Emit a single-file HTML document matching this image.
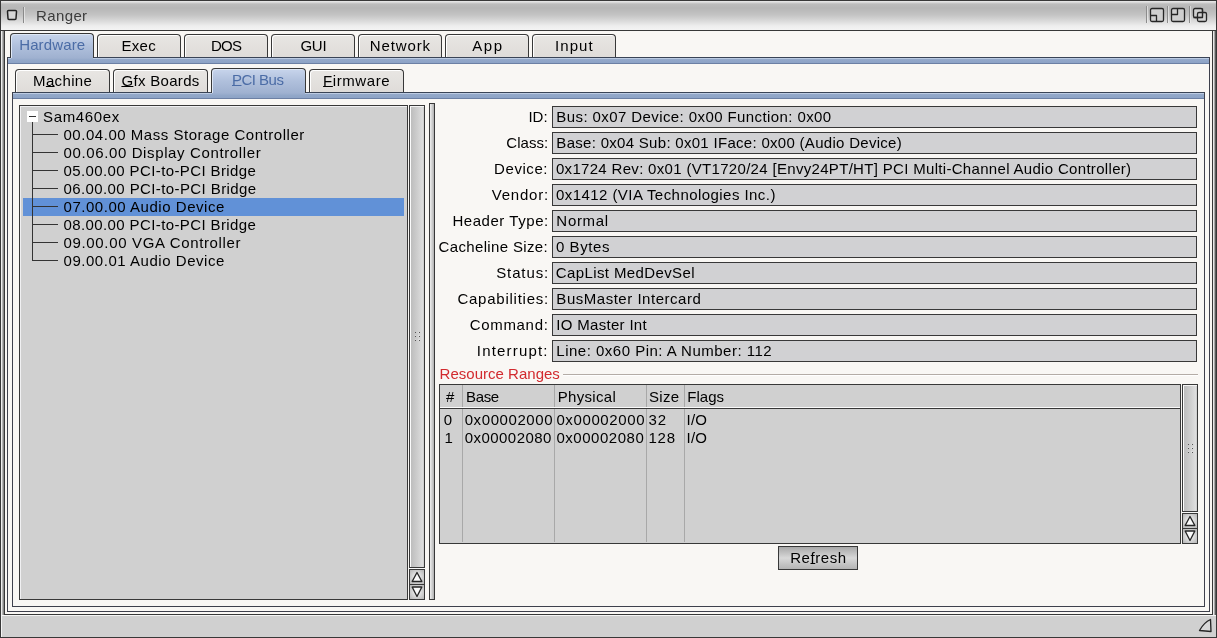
<!DOCTYPE html>
<html><head><meta charset="utf-8"><style>
html,body{margin:0;padding:0;width:1217px;height:638px;overflow:hidden;}
body{position:relative;will-change:transform;font-family:"Liberation Sans", sans-serif;font-size:15px;color:#000;}
.t{position:absolute;white-space:pre;font-size:15px;line-height:18px;}
.tab{position:absolute;box-sizing:border-box;border:1px solid #383838;border-bottom:none;border-radius:4px 4px 0 0;
 background:linear-gradient(#e8e6e3,#dfdcd9);box-shadow:inset 1px 1px 0 #fff;}
.tab.act{z-index:2;background:linear-gradient(#c8d5ec,#b0c0dc 50%,#9fb1d0);box-shadow:inset 1px 1px 0 #dfe8f6;}
u{text-decoration:underline;text-underline-offset:0px;text-decoration-thickness:1px;}
</style></head><body>
<div style="position:absolute;left:0px;top:0px;width:1217px;height:638px;background:#f9f7f4;"></div><div style="position:absolute;left:0px;top:0px;width:1217px;height:638px;box-sizing:border-box;border:1px solid #383838;"></div><div style="position:absolute;left:1px;top:1px;width:1215px;height:29px;background:linear-gradient(#e8e8e8 0px,#e0e0e0 1px,#bcbcbc 3px,#b6b6b6 7px,#c4c4c4 14px,#dadada 20px,#eeeeee 25px,#f4f4f4 29px);"></div><div style="position:absolute;left:0px;top:30px;width:1217px;height:1px;background:#383838;"></div><div style="position:absolute;left:1px;top:31px;width:3px;height:584px;background:linear-gradient(90deg,#eeeeee 0,#eeeeee 1px,#b4b4b4 1px,#b4b4b4 2px,#8a8a8a 2px);"></div><div style="position:absolute;left:4px;top:30px;width:1px;height:585px;background:#383838;"></div><div style="position:absolute;left:1213px;top:31px;width:3px;height:584px;background:linear-gradient(90deg,#e8e8e8 0,#e8e8e8 1px,#a8a8a8 1px,#a8a8a8 2px,#5c5c5c 2px);"></div><div style="position:absolute;left:1212px;top:30px;width:1px;height:585px;background:#383838;"></div><div style="position:absolute;left:1px;top:615px;width:1215px;height:22px;background:#d0d0d0;box-shadow:inset 1px 1px 0 #f4f4f4;"></div><div style="position:absolute;left:4px;top:614px;width:1209px;height:1px;background:#383838;"></div><svg style="position:absolute;left:1198px;top:618px" width="16" height="16" viewBox="0 0 16 16"><path d="M12.5 1.5 C8 3.5 4 8 1.5 12.5 L13 13.5 Z" fill="#d8d8d8" stroke="#262626" stroke-width="1.35" stroke-linejoin="round"/></svg><svg style="position:absolute;left:0;top:0" width="40" height="30"><path d="M7.5 11.5 Q7.5 10.5 8.5 10.5 H15.5 Q16.5 10.5 16.5 11.5 L16 18.5 Q16 19.5 15 19.5 H9 Q8 19.5 8 18.5 Z" fill="#d6d6d6" stroke="#222" stroke-width="1.5"/><line x1="23.5" y1="7" x2="23.5" y2="23" stroke="#8a8a8a" stroke-width="1"/><line x1="24.5" y1="7" x2="24.5" y2="23" stroke="#f4f4f4" stroke-width="1" stroke-opacity="0.6"/></svg><div class="t" style="left:36.00px;top:7px;letter-spacing:0.380px;font-size:15px;color:#3c3c3c;">Ranger</div><svg style="position:absolute;left:1140px;top:0" width="77" height="30">
<line x1="6.5" y1="6" x2="6.5" y2="23" stroke="#8c8c8c"/><line x1="7.5" y1="6" x2="7.5" y2="23" stroke="#f0f0f0" stroke-opacity="0.6"/>
<line x1="27.5" y1="6" x2="27.5" y2="23" stroke="#8c8c8c"/><line x1="28.5" y1="6" x2="28.5" y2="23" stroke="#f0f0f0" stroke-opacity="0.6"/>
<line x1="49.5" y1="6" x2="49.5" y2="23" stroke="#8c8c8c"/><line x1="50.5" y1="6" x2="50.5" y2="23" stroke="#f0f0f0" stroke-opacity="0.6"/>
<g stroke="#262626" stroke-width="1.3" stroke-linejoin="round">
<rect x="10.5" y="8.5" width="13" height="13" rx="1.5" fill="#cfcfcf"/>
<path d="M10.5 15.5 H16.5 V21.5" fill="none"/>
<rect x="31.5" y="8.5" width="13" height="13" rx="1.5" fill="#cfcfcf"/>
<path d="M37.5 8.5 V14.5 H31.5" fill="none"/>
<rect x="53.5" y="8.5" width="9" height="9" rx="1.5" fill="#cfcfcf"/>
<rect x="57.5" y="12.5" width="9" height="9" rx="1.5" fill="#cfcfcf" fill-opacity="0.6"/>
<path d="M53.5 17.5 H62.5 V8.5" fill="none"/>
</g>
</svg><div class="tab act" style="left:10px;top:33px;width:84px;height:25px;"></div><div style="position:absolute;z-index:2;left:11px;top:58px;width:82px;height:2px;background:linear-gradient(#9fb1d0,#94a9ca);"></div><div class="t" style="left:19.20px;top:36px;letter-spacing:0.129px;font-size:15px;color:#4b6ca6;z-index:3;">Hardware</div><div class="tab" style="left:97px;top:34px;width:84px;height:23px;"></div><div class="t" style="left:121.50px;top:37px;letter-spacing:0.267px;font-size:15px;">Exec</div><div class="tab" style="left:184px;top:34px;width:84px;height:23px;"></div><div class="t" style="left:211.00px;top:37px;letter-spacing:-0.750px;font-size:15px;">DOS</div><div class="tab" style="left:271px;top:34px;width:84px;height:23px;"></div><div class="t" style="left:300.40px;top:37px;letter-spacing:-0.250px;font-size:15px;">GUI</div><div class="tab" style="left:358px;top:34px;width:84px;height:23px;"></div><div class="t" style="left:369.80px;top:37px;letter-spacing:0.867px;font-size:15px;">Network</div><div class="tab" style="left:445px;top:34px;width:84px;height:23px;"></div><div class="t" style="left:472.30px;top:37px;letter-spacing:1.500px;font-size:15px;">App</div><div class="tab" style="left:532px;top:34px;width:84px;height:23px;"></div><div class="t" style="left:555.10px;top:37px;letter-spacing:1.025px;font-size:15px;">Input</div><div style="position:absolute;left:7px;top:57px;width:1203px;height:7px;box-sizing:border-box;border-top:1px solid #3a4456;background:linear-gradient(#bccbe2 0,#bccbe2 1px,#94a9ca 1px,#8da3c6);border-bottom:1px solid #6c80a4;"></div><div style="position:absolute;left:7px;top:57px;width:1px;height:555px;background:#3e404c;"></div><div style="position:absolute;left:1209px;top:57px;width:1px;height:555px;background:#3e404c;"></div><div style="position:absolute;left:7px;top:611px;width:1203px;height:1px;background:#3e404c;"></div><div class="tab" style="left:15px;top:69px;width:95px;height:23px;"></div><div class="t" style="left:33.00px;top:72px;letter-spacing:0.367px;font-size:15px;">M<u>a</u>chine</div><div class="tab" style="left:113px;top:69px;width:95px;height:23px;"></div><div class="t" style="left:121.40px;top:72px;letter-spacing:0.322px;font-size:15px;"><u>G</u>fx Boards</div><div class="tab act" style="left:211px;top:68px;width:95px;height:25px;"></div><div style="position:absolute;z-index:2;left:212px;top:93px;width:93px;height:2px;background:linear-gradient(#9fb1d0,#94a9ca);"></div><div class="t" style="left:232.00px;top:71px;letter-spacing:-0.517px;font-size:15px;color:#4b6ca6;z-index:3;"><u>P</u>CI Bus</div><div class="tab" style="left:309px;top:69px;width:95px;height:23px;"></div><div class="t" style="left:323.10px;top:72px;letter-spacing:0.571px;font-size:15px;"><u>F</u>irmware</div><div style="position:absolute;left:12px;top:92px;width:1193px;height:7px;box-sizing:border-box;border-top:1px solid #3a4456;background:linear-gradient(#bccbe2 0,#bccbe2 1px,#94a9ca 1px,#8da3c6);border-bottom:1px solid #6c80a4;"></div><div style="position:absolute;left:12px;top:92px;width:1px;height:515px;background:#3e404c;"></div><div style="position:absolute;left:1204px;top:92px;width:1px;height:515px;background:#3e404c;"></div><div style="position:absolute;left:12px;top:606px;width:1193px;height:1px;background:#3e404c;"></div><div style="position:absolute;left:19px;top:105px;width:389px;height:495px;box-sizing:border-box;border:1px solid #383838;background:#d0d0d0;box-shadow:inset 1px 1px 0 #f0f0f2;"></div><div style="position:absolute;left:23px;top:198px;width:381px;height:18px;background:#6191d7;"></div><div style="position:absolute;left:27px;top:111px;width:11px;height:11px;background:#fff;"></div><div style="position:absolute;left:29px;top:116px;width:7px;height:1px;background:#333;"></div><div class="t" style="left:43.00px;top:108px;letter-spacing:0.643px;font-size:15px;">Sam460ex</div><div style="position:absolute;left:32px;top:122px;width:1px;height:139px;background:#333;"></div><div style="position:absolute;left:33px;top:134px;width:25px;height:1px;background:#333;"></div><div class="t" style="left:63.50px;top:126px;letter-spacing:0.532px;font-size:15px;">00.04.00 Mass Storage Controller</div><div style="position:absolute;left:33px;top:152px;width:25px;height:1px;background:#333;"></div><div class="t" style="left:63.50px;top:144px;letter-spacing:0.623px;font-size:15px;">00.06.00 Display Controller</div><div style="position:absolute;left:33px;top:170px;width:25px;height:1px;background:#333;"></div><div class="t" style="left:63.50px;top:162px;letter-spacing:0.392px;font-size:15px;">05.00.00 PCI-to-PCI Bridge</div><div style="position:absolute;left:33px;top:188px;width:25px;height:1px;background:#333;"></div><div class="t" style="left:63.50px;top:180px;letter-spacing:0.400px;font-size:15px;">06.00.00 PCI-to-PCI Bridge</div><div style="position:absolute;left:33px;top:206px;width:25px;height:1px;background:#333;"></div><div class="t" style="left:63.50px;top:198px;letter-spacing:0.535px;font-size:15px;">07.00.00 Audio Device</div><div style="position:absolute;left:33px;top:224px;width:25px;height:1px;background:#333;"></div><div class="t" style="left:63.50px;top:216px;letter-spacing:0.392px;font-size:15px;">08.00.00 PCI-to-PCI Bridge</div><div style="position:absolute;left:33px;top:242px;width:25px;height:1px;background:#333;"></div><div class="t" style="left:63.50px;top:234px;letter-spacing:0.659px;font-size:15px;">09.00.00 VGA Controller</div><div style="position:absolute;left:33px;top:260px;width:25px;height:1px;background:#333;"></div><div class="t" style="left:63.50px;top:252px;letter-spacing:0.535px;font-size:15px;">09.00.01 Audio Device</div><div style="position:absolute;left:409px;top:105px;width:16px;height:496px;background:#f8f8f8;"></div><div style="position:absolute;left:409px;top:105px;width:16px;height:463px;box-sizing:border-box;border:1px solid #383838;background:linear-gradient(90deg,#fbfbfb 0,#fbfbfb 1px,#bdbdbd 1px,#cfcfcf 55%,#dedede 90%,#c8c8c8);"></div><div style="position:absolute;left:410px;top:106px;width:14px;height:1px;background:#f4f4f4;"></div><svg style="position:absolute;left:415px;top:332px" width="6" height="11"><g fill="#fff"><rect x="-0.5" y="-0.5" width="1" height="1"/><rect x="3.5" y="-0.5" width="1" height="1"/><rect x="-0.5" y="3.5" width="1" height="1"/><rect x="3.5" y="3.5" width="1" height="1"/><rect x="-0.5" y="7.5" width="1" height="1"/><rect x="3.5" y="7.5" width="1" height="1"/></g><g fill="#555"><rect x="0" y="0" width="1" height="1"/><rect x="4" y="0" width="1" height="1"/><rect x="0" y="4" width="1" height="1"/><rect x="4" y="4" width="1" height="1"/><rect x="0" y="8" width="1" height="1"/><rect x="4" y="8" width="1" height="1"/></g></svg><div style="position:absolute;left:409px;top:569px;width:16px;height:16px;box-sizing:border-box;border:1px solid #383838;background:radial-gradient(ellipse at 50% 50%,#e4e4e4 30%,#b4b4b4 100%);"></div><div style="position:absolute;left:409px;top:584px;width:16px;height:16px;box-sizing:border-box;border:1px solid #383838;background:radial-gradient(ellipse at 50% 50%,#e4e4e4 30%,#b4b4b4 100%);"></div><svg style="position:absolute;left:0;top:0;overflow:visible" width="1" height="1"><path d="M417.0 572.5 L421.7 581.2 Q422.0 581.5 421.3 581.5 H412.7 Q412.0 581.5 412.3 581.2 Z" fill="#fafafa" stroke="#262626" stroke-width="1.35" stroke-linejoin="round"/><path d="M412.7 587 H421.3 Q422.0 587 421.7 587.3 L417.0 596.5 L412.3 587.3 Q412.0 587 412.7 587 Z" fill="#fafafa" stroke="#262626" stroke-width="1.35" stroke-linejoin="round"/></svg><div style="position:absolute;left:429px;top:103px;width:6px;height:497px;box-sizing:border-box;border:1px solid #383838;background:linear-gradient(90deg,#f0f0f0,#b0b0b0);"></div><div class="t" style="left:528.40px;top:108px;letter-spacing:0.050px;font-size:15px;">ID:</div><div style="position:absolute;left:552px;top:106px;width:645px;height:22px;box-sizing:border-box;border:1px solid #383838;background:#d1d1d3;"></div><div class="t" style="left:556.37px;top:108px;letter-spacing:0.406px;font-size:15px;">Bus: 0x07 Device: 0x00 Function: 0x00</div><div class="t" style="left:506.30px;top:134px;letter-spacing:0.040px;font-size:15px;">Class:</div><div style="position:absolute;left:552px;top:132px;width:645px;height:22px;box-sizing:border-box;border:1px solid #383838;background:#d1d1d3;"></div><div class="t" style="left:556.37px;top:134px;letter-spacing:0.294px;font-size:15px;">Base: 0x04 Sub: 0x01 IFace: 0x00 (Audio Device)</div><div class="t" style="left:494.10px;top:160px;letter-spacing:0.567px;font-size:15px;">Device:</div><div style="position:absolute;left:552px;top:158px;width:645px;height:22px;box-sizing:border-box;border:1px solid #383838;background:#d1d1d3;"></div><div class="t" style="left:555.92px;top:160px;letter-spacing:0.317px;font-size:15px;">0x1724 Rev: 0x01 (VT1720/24 [Envy24PT/HT] PCI Multi-Channel Audio Controller)</div><div class="t" style="left:491.70px;top:186px;letter-spacing:0.800px;font-size:15px;">Vendor:</div><div style="position:absolute;left:552px;top:184px;width:645px;height:22px;box-sizing:border-box;border:1px solid #383838;background:#d1d1d3;"></div><div class="t" style="left:555.92px;top:186px;letter-spacing:0.448px;font-size:15px;">0x1412 (VIA Technologies Inc.)</div><div class="t" style="left:452.40px;top:212px;letter-spacing:0.555px;font-size:15px;">Header Type:</div><div style="position:absolute;left:552px;top:210px;width:645px;height:22px;box-sizing:border-box;border:1px solid #383838;background:#d1d1d3;"></div><div class="t" style="left:556.37px;top:212px;letter-spacing:0.686px;font-size:15px;">Normal</div><div class="t" style="left:438.50px;top:238px;letter-spacing:0.357px;font-size:15px;">Cacheline Size:</div><div style="position:absolute;left:552px;top:236px;width:645px;height:22px;box-sizing:border-box;border:1px solid #383838;background:#d1d1d3;"></div><div class="t" style="left:555.92px;top:238px;letter-spacing:0.580px;font-size:15px;">0 Bytes</div><div class="t" style="left:496.20px;top:264px;letter-spacing:0.883px;font-size:15px;">Status:</div><div style="position:absolute;left:552px;top:262px;width:645px;height:22px;box-sizing:border-box;border:1px solid #383838;background:#d1d1d3;"></div><div class="t" style="left:555.79px;top:264px;letter-spacing:0.388px;font-size:15px;">CapList MedDevSel</div><div class="t" style="left:457.40px;top:290px;letter-spacing:0.758px;font-size:15px;">Capabilities:</div><div style="position:absolute;left:552px;top:288px;width:645px;height:22px;box-sizing:border-box;border:1px solid #383838;background:#d1d1d3;"></div><div class="t" style="left:556.37px;top:290px;letter-spacing:0.518px;font-size:15px;">BusMaster Intercard</div><div class="t" style="left:469.70px;top:316px;letter-spacing:0.686px;font-size:15px;">Command:</div><div style="position:absolute;left:552px;top:314px;width:645px;height:22px;box-sizing:border-box;border:1px solid #383838;background:#d1d1d3;"></div><div class="t" style="left:556.37px;top:316px;letter-spacing:0.302px;font-size:15px;">IO Master Int</div><div class="t" style="left:476.80px;top:342px;letter-spacing:1.189px;font-size:15px;">Interrupt:</div><div style="position:absolute;left:552px;top:340px;width:645px;height:22px;box-sizing:border-box;border:1px solid #383838;background:#d1d1d3;"></div><div class="t" style="left:556.37px;top:342px;letter-spacing:0.490px;font-size:15px;">Line: 0x60 Pin: A Number: 112</div><div class="t" style="left:439.60px;top:365px;letter-spacing:0.014px;font-size:15px;color:#d22a2e;">Resource Ranges</div><div style="position:absolute;left:563px;top:374px;width:635px;height:1px;background:#b4aca6;"></div><div style="position:absolute;left:563px;top:375px;width:635px;height:1px;background:#ffffff;"></div><div style="position:absolute;left:439px;top:384px;width:742px;height:160px;box-sizing:border-box;border:1px solid #383838;background:#d0d0d0;"></div><div style="position:absolute;left:462px;top:385px;width:1px;height:157px;background:#a8a8a8;"></div><div style="position:absolute;left:554px;top:385px;width:1px;height:157px;background:#a8a8a8;"></div><div style="position:absolute;left:646px;top:385px;width:1px;height:157px;background:#a8a8a8;"></div><div style="position:absolute;left:684px;top:385px;width:1px;height:157px;background:#a8a8a8;"></div><div style="position:absolute;left:440px;top:407px;width:740px;height:1px;background:#fafafa;"></div><div style="position:absolute;left:440px;top:408px;width:740px;height:1px;background:#383838;"></div><div class="t" style="left:446.00px;top:388px;letter-spacing:0.000px;font-size:15px;">#</div><div class="t" style="left:466.00px;top:388px;letter-spacing:-0.333px;font-size:15px;">Base</div><div class="t" style="left:557.70px;top:388px;letter-spacing:0.314px;font-size:15px;">Physical</div><div class="t" style="left:649.00px;top:388px;letter-spacing:0.333px;font-size:15px;">Size</div><div class="t" style="left:687.30px;top:388px;letter-spacing:0.000px;font-size:15px;">Flags</div><div class="t" style="left:443.80px;top:411px;letter-spacing:0.000px;font-size:15px;">0</div><div class="t" style="left:464.70px;top:411px;letter-spacing:0.589px;font-size:15px;">0x00002000</div><div class="t" style="left:556.40px;top:411px;letter-spacing:0.622px;font-size:15px;">0x00002000</div><div class="t" style="left:648.40px;top:411px;letter-spacing:1.000px;font-size:15px;">32</div><div class="t" style="left:686.60px;top:411px;letter-spacing:0.200px;font-size:15px;">I/O</div><div class="t" style="left:444.50px;top:429px;letter-spacing:0.000px;font-size:15px;">1</div><div class="t" style="left:464.70px;top:429px;letter-spacing:0.456px;font-size:15px;">0x00002080</div><div class="t" style="left:556.40px;top:429px;letter-spacing:0.533px;font-size:15px;">0x00002080</div><div class="t" style="left:648.40px;top:429px;letter-spacing:0.800px;font-size:15px;">128</div><div class="t" style="left:686.60px;top:429px;letter-spacing:0.200px;font-size:15px;">I/O</div><div style="position:absolute;left:1182px;top:384px;width:16px;height:160px;background:#f8f8f8;"></div><div style="position:absolute;left:1182px;top:384px;width:16px;height:128px;box-sizing:border-box;border:1px solid #383838;background:linear-gradient(90deg,#fbfbfb 0,#fbfbfb 1px,#bdbdbd 1px,#cfcfcf 55%,#dedede 90%,#c8c8c8);"></div><div style="position:absolute;left:1183px;top:385px;width:14px;height:1px;background:#f4f4f4;"></div><svg style="position:absolute;left:1188px;top:444px" width="6" height="11"><g fill="#fff"><rect x="-0.5" y="-0.5" width="1" height="1"/><rect x="3.5" y="-0.5" width="1" height="1"/><rect x="-0.5" y="3.5" width="1" height="1"/><rect x="3.5" y="3.5" width="1" height="1"/><rect x="-0.5" y="7.5" width="1" height="1"/><rect x="3.5" y="7.5" width="1" height="1"/></g><g fill="#555"><rect x="0" y="0" width="1" height="1"/><rect x="4" y="0" width="1" height="1"/><rect x="0" y="4" width="1" height="1"/><rect x="4" y="4" width="1" height="1"/><rect x="0" y="8" width="1" height="1"/><rect x="4" y="8" width="1" height="1"/></g></svg><div style="position:absolute;left:1182px;top:513px;width:16px;height:16px;box-sizing:border-box;border:1px solid #383838;background:radial-gradient(ellipse at 50% 50%,#e4e4e4 30%,#b4b4b4 100%);"></div><div style="position:absolute;left:1182px;top:528px;width:16px;height:16px;box-sizing:border-box;border:1px solid #383838;background:radial-gradient(ellipse at 50% 50%,#e4e4e4 30%,#b4b4b4 100%);"></div><svg style="position:absolute;left:0;top:0;overflow:visible" width="1" height="1"><path d="M1190.0 516.5 L1194.7 525.2 Q1195.0 525.5 1194.3 525.5 H1185.7 Q1185.0 525.5 1185.3 525.2 Z" fill="#fafafa" stroke="#262626" stroke-width="1.35" stroke-linejoin="round"/><path d="M1185.7 531 H1194.3 Q1195.0 531 1194.7 531.3 L1190.0 540.5 L1185.3 531.3 Q1185.0 531 1185.7 531 Z" fill="#fafafa" stroke="#262626" stroke-width="1.35" stroke-linejoin="round"/></svg><div style="position:absolute;left:778px;top:546px;width:80px;height:24px;box-sizing:border-box;border:1px solid #383838;background:linear-gradient(#a8a8a8,#d8d8d8 50%,#b4b4b4);"></div><div class="t" style="left:790.20px;top:549px;letter-spacing:0.567px;font-size:15px;">Re<u>f</u>resh</div>
</body></html>
